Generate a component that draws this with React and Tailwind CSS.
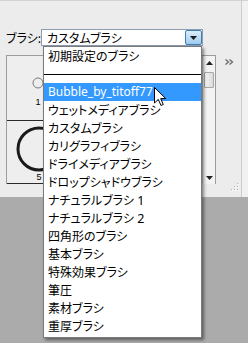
export default function App() {
  const items = [
    "初期設定のブラシ",
    "__SEP__",
    "Bubble_by_titoff77",
    "ウェットメディアブラシ",
    "カスタムブラシ",
    "カリグラフィブラシ",
    "ドライメディアブラシ",
    "ドロップシャドウブラシ",
    "ナチュラルブラシ|1",
    "ナチュラルブラシ|2",
    "四角形のブラシ",
    "基本ブラシ",
    "特殊効果ブラシ",
    "筆圧",
    "素材ブラシ",
    "重厚ブラシ",
  ];
  return (
    <div className="relative w-[248px] h-[343px] overflow-hidden bg-[#ababab] font-['Noto_Sans_CJK_JP',sans-serif] text-[12px] text-black [font-feature-settings:'palt']">
      {/* panel */}
      <div className="h-[197px] w-full bg-[#ececec] border-t border-[#d2d2d2] flex">
        <div className="w-[242px] border-r border-[#cdcdcd] flex flex-col pt-[28px] pl-[6px]">
          {/* row 1 */}
          <div className="flex items-center h-[17px]">
            <div className="w-[35px] leading-[17px] whitespace-nowrap">ブラシ:</div>
            <div className="w-[162px] h-[17px] border border-[#8c9db4] bg-white flex items-center">
              <div className="flex-1 pl-[5px] leading-[15px] whitespace-nowrap">カスタムブラシ</div>
              <div className="w-[17px] h-[15px] rounded-[2px] border border-[#3c7fb1] bg-gradient-to-b from-[#dcedfa] to-[#9fcbee] flex items-center justify-center">
                <svg width="7" height="4" viewBox="0 0 7 4">
                  <polygon points="0,0 7,0 3.5,4" fill="#1a1a1a" />
                </svg>
              </div>
            </div>
          </div>
          {/* row 2 */}
          <div className="flex mt-[9px] flex-1">
            <div className="w-[210px] h-[129px] border-t border-l border-r border-[#9c9c9c] bg-[#eeeeee] flex">
              <div className="flex-1 flex flex-col">
                <div className="h-[65px] border-b border-[#2a2a2a] flex">
                  <div className="w-[62px] flex flex-col items-center pt-[21px]">
                    <svg width="12" height="12" viewBox="0 0 12 12">
                      <circle cx="6" cy="6" r="5" fill="none" stroke="#7a7a7a" strokeWidth="1" />
                    </svg>
                    <div className="mt-[8px] text-[9px] leading-[10px] font-['Liberation_Sans',sans-serif]">1</div>
                  </div>
                </div>
                <div className="h-[63px] border-b border-[#2a2a2a] flex">
                  <div className="w-[64px] flex flex-col items-center pt-[5px]">
                    <svg width="46" height="46" viewBox="0 0 46 46">
                      <circle cx="23" cy="23" r="21" fill="none" stroke="#1a1a1a" strokeWidth="3" />
                    </svg>
                    <div className="text-[9px] leading-[10px] font-['Liberation_Sans',sans-serif]">5</div>
                  </div>
                </div>
              </div>
              {/* scrollbar */}
              <div className="w-[13px] flex flex-col bg-[#f3f3f3] border-l border-[#d0d0d0]">
                <div className="h-[13px] flex items-center justify-center">
                  <svg width="7" height="4" viewBox="0 0 7 4">
                    <polygon points="3.5,0 7,4 0,4" fill="#222" />
                  </svg>
                </div>
                <div className="mt-[3px] mx-[1px] h-[16px] border border-[#a8a8a8] rounded-[1px] bg-gradient-to-r from-[#f4f4f4] to-[#dcdcdc]" />
                <div className="flex-1" />
                <div className="h-[13px] flex items-center justify-center">
                  <svg width="7" height="4" viewBox="0 0 7 4">
                    <polygon points="0,0 7,0 3.5,4" fill="#222" />
                  </svg>
                </div>
              </div>
            </div>
            {/* right column */}
            <div className="flex-1 flex flex-col items-center justify-between pt-[4px] pb-[6px]">
              <svg width="9" height="6" viewBox="0 0 9 6" className="ml-[2px]">
                <polyline points="0.5,0.5 3.5,3 0.5,5.5" fill="none" stroke="#6e6e6e" strokeWidth="1.4" />
                <polyline points="4.5,0.5 7.5,3 4.5,5.5" fill="none" stroke="#6e6e6e" strokeWidth="1.4" />
              </svg>
              <svg width="8" height="8" viewBox="0 0 8 8" className="self-end mr-[2px]">
                <rect x="6" y="0" width="1" height="1" fill="#b5b5b5" />
                <rect x="3" y="3" width="1" height="1" fill="#b5b5b5" />
                <rect x="6" y="3" width="1" height="1" fill="#b5b5b5" />
                <rect x="0" y="6" width="1" height="1" fill="#b5b5b5" />
                <rect x="3" y="6" width="1" height="1" fill="#b5b5b5" />
                <rect x="6" y="6" width="1" height="1" fill="#b5b5b5" />
                <rect x="7" y="1" width="1" height="1" fill="#fff" />
                <rect x="4" y="4" width="1" height="1" fill="#fff" />
                <rect x="7" y="4" width="1" height="1" fill="#fff" />
                <rect x="1" y="7" width="1" height="1" fill="#fff" />
                <rect x="4" y="7" width="1" height="1" fill="#fff" />
                <rect x="7" y="7" width="1" height="1" fill="#fff" />
              </svg>
            </div>
          </div>
        </div>
        <div className="flex-1 bg-[#f1f1f1]" />
      </div>

      {/* dropdown list overlay */}
      <div className="absolute left-[43px] top-[46px] w-[159px] bg-white border border-[#7a7a7a] pb-[2px] shadow-[2px_2px_3px_rgba(0,0,0,0.45)]">
        {items.map((it, i) => {
          if (it === "__SEP__") {
            return (
              <div key={i} className="h-[18px] flex items-center">
                <div className="w-full h-[1px] bg-black" />
              </div>
            );
          }
          if (i === 2) {
            return (
              <div
                key={i}
                className="h-[18px] leading-[18px] pl-[4px] whitespace-nowrap bg-[#3399ff] text-white font-['Noto_Sans',sans-serif] text-[12px]"
              >
                {it}
              </div>
            );
          }
          if (it.includes("|")) {
            const [a, b] = it.split("|");
            return (
              <div key={i} className="h-[18px] leading-[18px] pl-[4px] whitespace-nowrap">
                {a}
                <span className="font-['Noto_Sans',sans-serif] text-[12.5px]">{" " + b}</span>
              </div>
            );
          }
          return (
            <div key={i} className="h-[18px] leading-[18px] pl-[4px] whitespace-nowrap">
              {it}
            </div>
          );
        })}
      </div>

      {/* mouse cursor */}
      <svg className="absolute left-[154px] top-[87px]" width="13" height="20" viewBox="0 0 13 20">
        <polygon
          points="0.5,0.5 0.5,16 4.3,12.4 7,18.5 9.3,17.5 6.7,11.6 11.8,11.6"
          fill="#fff"
          stroke="#000"
          strokeWidth="1"
          strokeLinejoin="miter"
        />
      </svg>
    </div>
  );
}
